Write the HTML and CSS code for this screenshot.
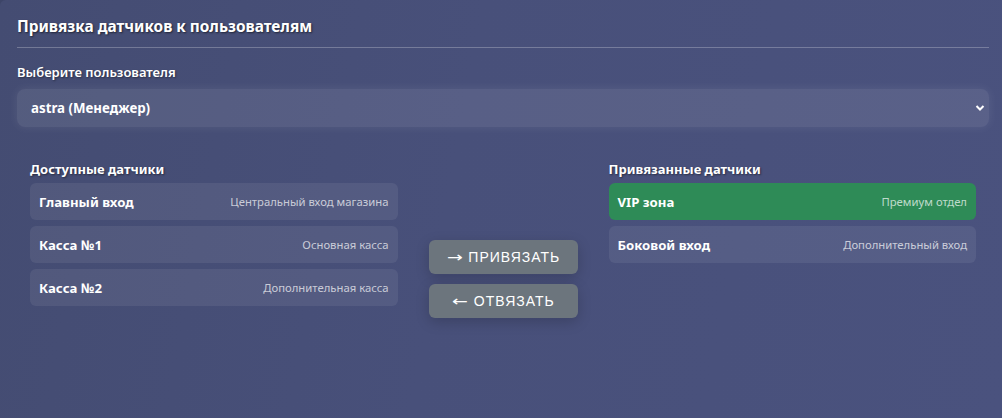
FILE: index.html
```html
<!DOCTYPE html>
<html lang="ru">
<head>
<meta charset="utf-8">
<title>Привязка датчиков</title>
<link rel="stylesheet" href="styles.css">
</head>
<body>
<div class="card">
  <h2 class="title">Привязка датчиков к пользователям</h2>
  <div class="field">
    <label class="label">Выберите пользователя</label>
    <div class="select">
      <span class="select-value">astra (Менеджер)</span>
      <svg class="chev" width="10" height="8" viewBox="0 0 10 8"><path d="M1.5 2 L5 5.5 L8.5 2" fill="none" stroke="#fff" stroke-width="2"/></svg>
    </div>
  </div>
  <div class="binder">
    <div class="col">
      <h3 class="col-title">Доступные датчики</h3>
      <div class="list">
        <div class="item"><span class="name">Главный вход</span><span class="desc">Центральный вход магазина</span></div>
        <div class="item"><span class="name">Касса №1</span><span class="desc">Основная касса</span></div>
        <div class="item"><span class="name">Касса №2</span><span class="desc">Дополнительная касса</span></div>
      </div>
    </div>
    <div class="actions">
      <button class="btn"><span class="arrow">→</span> ПРИВЯЗАТЬ</button>
      <button class="btn"><span class="arrow">←</span> ОТВЯЗАТЬ</button>
    </div>
    <div class="col">
      <h3 class="col-title">Привязанные датчики</h3>
      <div class="list">
        <div class="item selected"><span class="name">VIP зона</span><span class="desc">Премиум отдел</span></div>
        <div class="item"><span class="name">Боковой вход</span><span class="desc">Дополнительный вход</span></div>
      </div>
    </div>
  </div>
</div>
</body>
</html>
```

FILE: styles.css
```css
html, body {
  margin: 0;
  padding: 0;
  height: 100%;
  background: #3d4568;
  overflow: hidden;
}
body {
  font-family: "Noto Sans", "Open Sans", sans-serif;
  color: #fff;
}
.card {
  height: 100%;
  box-sizing: border-box;
  padding: 17px 13px 0 17px;
  border-top-left-radius: 6px;
  background: linear-gradient(100deg, #444c72 0%, #48507a 45%, #4a527e 100%);
}
.title {
  margin: 0;
  font-size: 15.4px;
  font-weight: 700;
  line-height: 20px;
  padding-bottom: 10px;
  border-bottom: 1px solid rgba(255,255,255,0.25);
  text-shadow: 1px 1px 2px rgba(0,0,0,0.55);
}
.field {
  margin-top: 15px;
}
.label {
  display: block;
  font-size: 13px;
  font-weight: 600;
  line-height: 18px;
  text-shadow: 1px 1px 2px rgba(0,0,0,0.4);
}
.select {
  margin-top: 8px;
  height: 38px;
  display: flex;
  align-items: center;
  justify-content: space-between;
  padding: 0 4px 0 14px;
  border-radius: 8px;
  background: rgba(255,255,255,0.09);
  box-shadow: 0 0 8px 1px rgba(255,255,255,0.07);
}
.select-value {
  font-size: 13.3px;
  font-weight: 700;
}
.chev {
  display: block;
}
.binder {
  display: grid;
  grid-template-columns: 1fr 149px 1fr;
  column-gap: 31px;
  padding: 33px 13px 0 13px;
}
.col-title {
  margin: 0 0 5px;
  font-size: 13px;
  font-weight: 700;
  line-height: 18px;
  text-shadow: 1px 1px 2px rgba(0,0,0,0.45);
}
.list {
  display: flex;
  flex-direction: column;
  gap: 6px;
}
.item {
  display: flex;
  align-items: center;
  justify-content: space-between;
  height: 37px;
  padding: 0 9px;
  border-radius: 6px;
  background: rgba(255,255,255,0.07);
}
.item.selected {
  background: #2e8b57;
}
.name {
  font-size: 13.2px;
  font-weight: 700;
}
.desc {
  font-size: 11.3px;
  color: rgba(255,255,255,0.7);
}
.actions {
  display: flex;
  flex-direction: column;
  gap: 10px;
  padding-top: 80px;
}
.btn {
  height: 34px;
  border: 0;
  border-radius: 6px;
  background: #6c757d;
  color: #fff;
  font-family: "Liberation Sans", Arial, sans-serif;
  font-size: 14px;
  letter-spacing: 1px;
  box-shadow: 0 4px 14px rgba(0,0,0,0.18);
}
.arrow {
  display: inline-block;
  font-family: "DejaVu Sans", sans-serif;
  letter-spacing: 0;
  transform: scaleX(1.35);
  margin: 0 3px;
}
```
